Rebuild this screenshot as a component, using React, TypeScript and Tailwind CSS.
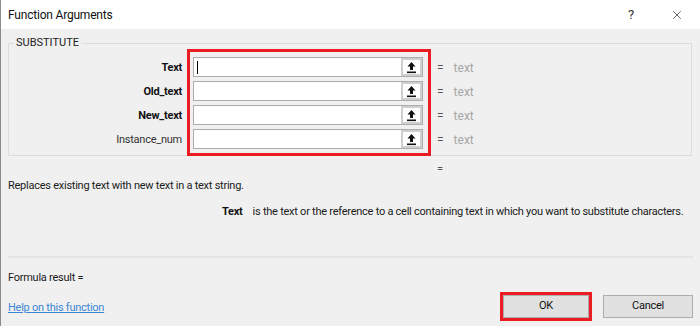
import { X } from "lucide-react";

const args = [
  { name: "Text", bold: true, caret: true },
  { name: "Old_text", bold: true },
  { name: "New_text", bold: true },
  { name: "Instance_num", bold: false },
];

function RefIcon() {
  return (
    <svg width="11" height="13" viewBox="0 0 11 13" aria-hidden="true">
      <path d="M5.5 1 L9.5 5.5 L7 5.5 L7 9 L4 9 L4 5.5 L1.5 5.5 Z" fill="#111" />
      <rect x="1" y="10.5" width="9" height="1.6" fill="#111" />
    </svg>
  );
}

function ArgInput({ caret }: { caret?: boolean }) {
  return (
    <div className="flex h-5 w-[230px] border border-[#adadad] bg-white">
      <div className="flex flex-1 items-center pl-[3px]">
        {caret && <div className="h-[13px] w-px bg-black" />}
      </div>
      <div className="flex w-[21px] items-center justify-center border-2 border-[#cfcfcf] bg-white">
        <RefIcon />
      </div>
    </div>
  );
}

export default function App() {
  return (
    <div
      className="flex h-[326px] w-[700px] flex-col border-l border-[#8c8c8c] bg-[#f0f0f0] text-[11px] tracking-[-0.25px] text-[#1b1b1b]"
      style={{ fontFamily: 'Roboto, "Liberation Sans", Arial, sans-serif' }}
    >
      <div className="flex h-[29px] items-center bg-white pl-[7px]">
        <span className="text-[12px] tracking-[-0.2px] text-[#111]">Function Arguments</span>
        <span className="ml-auto text-[13px] text-[#333]">?</span>
        <X className="ml-[36px] mr-[16px] text-[#222]" size={14} strokeWidth={1.2} />
      </div>

      <div className="flex flex-1 flex-col pl-[7px] pr-[7px]">
        <fieldset className="mt-2 mr-px h-[119px] border border-[#dcdcdc]">
          <legend className="ml-[5px] px-[2px] text-[11px] leading-[12px] tracking-normal text-[#222]">
            SUBSTITUTE
          </legend>
          <div className="flex items-start">
            <div className="flex w-[173px] flex-col gap-1 pt-[9px]">
              {args.map((a) => (
                <div
                  key={a.name}
                  className={
                    "flex h-5 items-center justify-end " +
                    (a.bold ? "font-bold text-[#111]" : "text-[#333]")
                  }
                >
                  {a.name}
                </div>
              ))}
            </div>
            <div className="ml-[5px] flex w-[244px] flex-col gap-1 border-[3px] border-[#ec1c24] pb-[4px] pl-[3px] pt-[5px]">
              {args.map((a) => (
                <ArgInput key={a.name} caret={a.caret} />
              ))}
            </div>
            <div className="flex flex-col gap-1 pl-[6px] pt-[9px] text-[12px] tracking-normal">
              {args.map((a) => (
                <div key={a.name} className="flex h-5 items-center">
                  <span className="text-[#555]">=</span>
                  <span className="ml-[10px] text-[#a6a6a6]">text</span>
                </div>
              ))}
            </div>
          </div>
        </fieldset>

        <div className="ml-[429px] mt-[5px] leading-4 text-[#555]">=</div>
        <div className="mt-px leading-4">
          Replaces existing text with new text in a text string.
        </div>
        <div className="ml-[214px] mt-[10px] flex whitespace-nowrap leading-4">
          <span className="font-bold text-[#111]">Text</span>
          <span className="ml-[10px]">
            is the text or the reference to a cell containing text in which you
            want to substitute characters.
          </span>
        </div>

        <div className="mt-auto border-t-2 border-[#e4e4e4]" />
        <div className="flex items-start">
          <div className="flex flex-col pt-[12px]">
            <span className="leading-4">Formula result =</span>
            <a
              href="#"
              className="mt-[14px] leading-4 text-[#3c86d4] underline"
            >
              Help on this function
            </a>
          </div>
          <div className="ml-auto mb-[5px] flex items-center gap-[11px] pt-[34px]">
            <div className="border-[3px] border-[#ec1c24]">
              <button className="h-[23px] w-[86px] border border-[#adadad] bg-[#e1e1e1] text-[#111]">
                OK
              </button>
            </div>
            <button className="h-[23px] w-[90px] border border-[#adadad] bg-[#e1e1e1] text-[#111]">
              Cancel
            </button>
          </div>
        </div>
      </div>
    </div>
  );
}
